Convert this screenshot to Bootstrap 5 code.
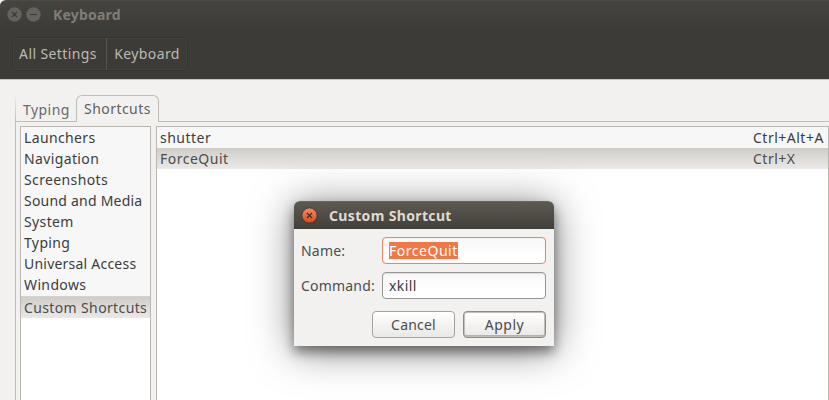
<!DOCTYPE html>
<html lang="en">
<head>
<meta charset="utf-8">
<meta name="viewport" content="width=device-width, initial-scale=1">
<title>Keyboard</title>
<link href="https://cdn.jsdelivr.net/npm/bootstrap@5.3.0/dist/css/bootstrap.min.css" rel="stylesheet">
<style>
body{font-family:"Noto Sans","Open Sans",sans-serif;font-size:14px;line-height:21px;color:#3c3c3c;background:#f2f1f0;height:400px;overflow:hidden;white-space:nowrap}
.app{height:400px}
.topbar{height:79px;background:linear-gradient(#45443f 0,#3c3b37 30px,#3c3b37);border-top:1px solid #4b4a45;border-radius:6px 0 0 0;flex:none}
.titlebar{height:26px;padding-left:7px}
.wtitle{font-weight:700;color:#807d78;margin-left:12px;letter-spacing:.2px}
.crumbs{margin:10px 0 0 12px;width:176px;height:34px;border:1px solid #353430;border-radius:5px;box-shadow:inset 0 0 0 1px #42413c}
.crumbs .btn{font-size:14px;line-height:20px;color:#bdbab1;border:0;border-radius:0;padding:0;letter-spacing:.4px}
.crumb-a{width:94px;padding-right:3px!important;border-right:1px solid #56554f!important}
.crumb-b{width:80px}
.content{border-top:1px solid #c9c6c2;padding:15px 0 0 15px;background:#f2f1f0}
.nav-tabs.tabs{height:27px;border:0;flex-wrap:nowrap;z-index:1}
.tabs .nav-link{padding:0;margin:0;border:0;color:#6a6a6a;font-size:14px;border-radius:0;letter-spacing:.45px}
.tabs .tab-off{width:61px;height:27px;padding:4px 0 0 7px;border-bottom:1px solid #c0bdb9;border-left:1px solid;border-image:linear-gradient(#f2f1f0,#c0bdb9) 1}
.tabs .tab-on{width:83px;height:27px;padding:2px 0 0 7px;border:1px solid #c0bdb9;border-bottom:0;border-radius:6px 6px 0 0;background:#f2f1f0;color:#606060}
.tab-rest{border-bottom:1px solid #c0bdb9}
.pane{border-left:1px solid #c0bdb9;padding:4px 0 0 4px;gap:5px}
.well{border:1px solid #b9b6b2;border-bottom:0;background:#fff}
.well-left{width:131px}
.well-right{width:673px}
.list-group-item.rowx{height:21px;padding:0 3px;border:0;border-radius:0;background:#f7f7f7;color:#3c3c3c;line-height:21px;letter-spacing:.37px}
.list-group-item.rowx.snug{letter-spacing:.22px}
.well-right .list-group-item.rowx{letter-spacing:.5px}
.list-group-item.rowx.picked{background:linear-gradient(#d0cdc9,#ebe9e7);color:#4c4c4c}
.rule{height:2px;background:#f7f7f7;border-bottom:1px solid #d5d2cf}
.keycol{width:72px}
.dialogx{position:absolute;left:294px;top:201px;width:260px;height:145px;background:#f2f1f0;border-radius:6px 6px 0 0;box-shadow:0 6px 12px rgba(0,0,0,.44),0 4px 40px rgba(0,0,0,.5);z-index:5}
.dtitle{height:28px;border-radius:6px 6px 0 0;background:linear-gradient(#5c5a50,#403f3a);border-top:1px solid #69675d;padding-left:7px;font-weight:700;color:#dfdbd2;letter-spacing:.35px}
.dtitle span{margin-left:11px}
.dbody{padding:8px 8px 0 7px}
.fieldrow{height:27px}
.fieldrow label{width:81px;color:#4c4c4c;letter-spacing:.2px}
.form-control.entry{width:164px;height:27px;padding:0 6px;font-size:14px;line-height:25px;border:1px solid #979695;border-radius:4px;color:#3c3c3c;letter-spacing:.4px;background:linear-gradient(#f7f7f7,#fff 70%);box-shadow:inset 0 1px 1px #ddd}
.form-control.entry.hot{display:flex;align-items:center;border-color:#e58a66;box-shadow:inset 0 0 1px #f2c3b0}
.sel{background:#f07746;color:#fff;height:17px;line-height:17px;letter-spacing:.52px}
.btn.push{width:83px;height:27px;padding:0;font-size:14px;line-height:24px;letter-spacing:.2px;border:1px solid #a5a3a0;border-radius:4px;color:#4c4c4c;background:linear-gradient(#fff,#eae8e6)}
.btn.push.def{letter-spacing:.5px;border-color:#8d8b88;box-shadow:inset 0 0 0 1px #c0bebb,inset 0 -2px 0 #b4b2af}
svg{flex:none}
</style>
<script src="https://cdn.jsdelivr.net/npm/bootstrap@5.3.0/dist/js/bootstrap.bundle.min.js"></script>
</head>
<body>
<div class="app d-flex flex-column position-relative">
  <header class="topbar">
    <div class="titlebar d-flex align-items-center">
      <svg width="15" height="15" viewBox="0 0 15 15"><circle cx="7.5" cy="7.5" r="7.2" fill="#65635d"/><path d="M5 5l5 5M10 5l-5 5" stroke="#3b3a36" stroke-width="1.2"/></svg>
      <svg class="ms-1" width="15" height="15" viewBox="0 0 15 15"><circle cx="7.5" cy="7.5" r="7.2" fill="#65635d"/><path d="M4 7.5h7" stroke="#3b3a36"/></svg>
      <span class="wtitle">Keyboard</span>
    </div>
    <div class="crumbs d-flex">
      <button class="btn crumb-a">All Settings</button><button class="btn crumb-b">Keyboard</button>
    </div>
  </header>
  <main class="content flex-grow-1 d-flex flex-column">
    <div class="nav nav-tabs tabs d-flex">
      <a class="nav-link tab-off">Typing</a>
      <a class="nav-link tab-on">Shortcuts</a>
      <span class="tab-rest flex-grow-1"></span>
    </div>
    <div class="pane d-flex flex-grow-1">
      <div class="well well-left">
        <div class="list-group rounded-0">
          <div class="list-group-item rowx">Launchers</div>
          <div class="list-group-item rowx">Navigation</div>
          <div class="list-group-item rowx">Screenshots</div>
          <div class="list-group-item rowx snug">Sound and Media</div>
          <div class="list-group-item rowx">System</div>
          <div class="list-group-item rowx">Typing</div>
          <div class="list-group-item rowx snug">Universal Access</div>
          <div class="list-group-item rowx">Windows</div>
          <div class="rule"></div>
          <div class="list-group-item rowx picked">Custom Shortcuts</div>
        </div>
      </div>
      <div class="well well-right">
        <div class="list-group rounded-0">
          <div class="list-group-item rowx d-flex justify-content-between"><span>shutter</span><span class="keycol">Ctrl+Alt+A</span></div>
          <div class="list-group-item rowx picked d-flex justify-content-between"><span>ForceQuit</span><span class="keycol">Ctrl+X</span></div>
        </div>
      </div>
    </div>
  </main>
  <section class="dialogx">
    <div class="dtitle d-flex align-items-center">
      <svg width="17" height="17" viewBox="0 0 17 17"><defs><linearGradient id="o" x2="0" y2="1"><stop stop-color="#f58a66"/><stop offset="1" stop-color="#dc4a1c"/></linearGradient></defs><circle cx="8.5" cy="8.5" r="7.6" fill="url(#o)" stroke="#3a342e" stroke-width=".8"/><path d="M6 6l5 5M11 6l-5 5" stroke="#46291f" stroke-width="1.2"/></svg>
      <span>Custom Shortcut</span>
    </div>
    <div class="dbody d-flex flex-column gap-2">
      <div class="fieldrow d-flex align-items-center"><label class="flex-shrink-0">Name:</label><div class="form-control entry hot"><span class="sel">ForceQuit</span></div></div>
      <div class="fieldrow d-flex align-items-center"><label class="flex-shrink-0">Command:</label><div class="form-control entry">xkill</div></div>
      <div class="d-flex justify-content-end gap-2 mt-1"><button class="btn push">Cancel</button><button class="btn push def">Apply</button></div>
    </div>
  </section>
</div>
</body>
</html>
